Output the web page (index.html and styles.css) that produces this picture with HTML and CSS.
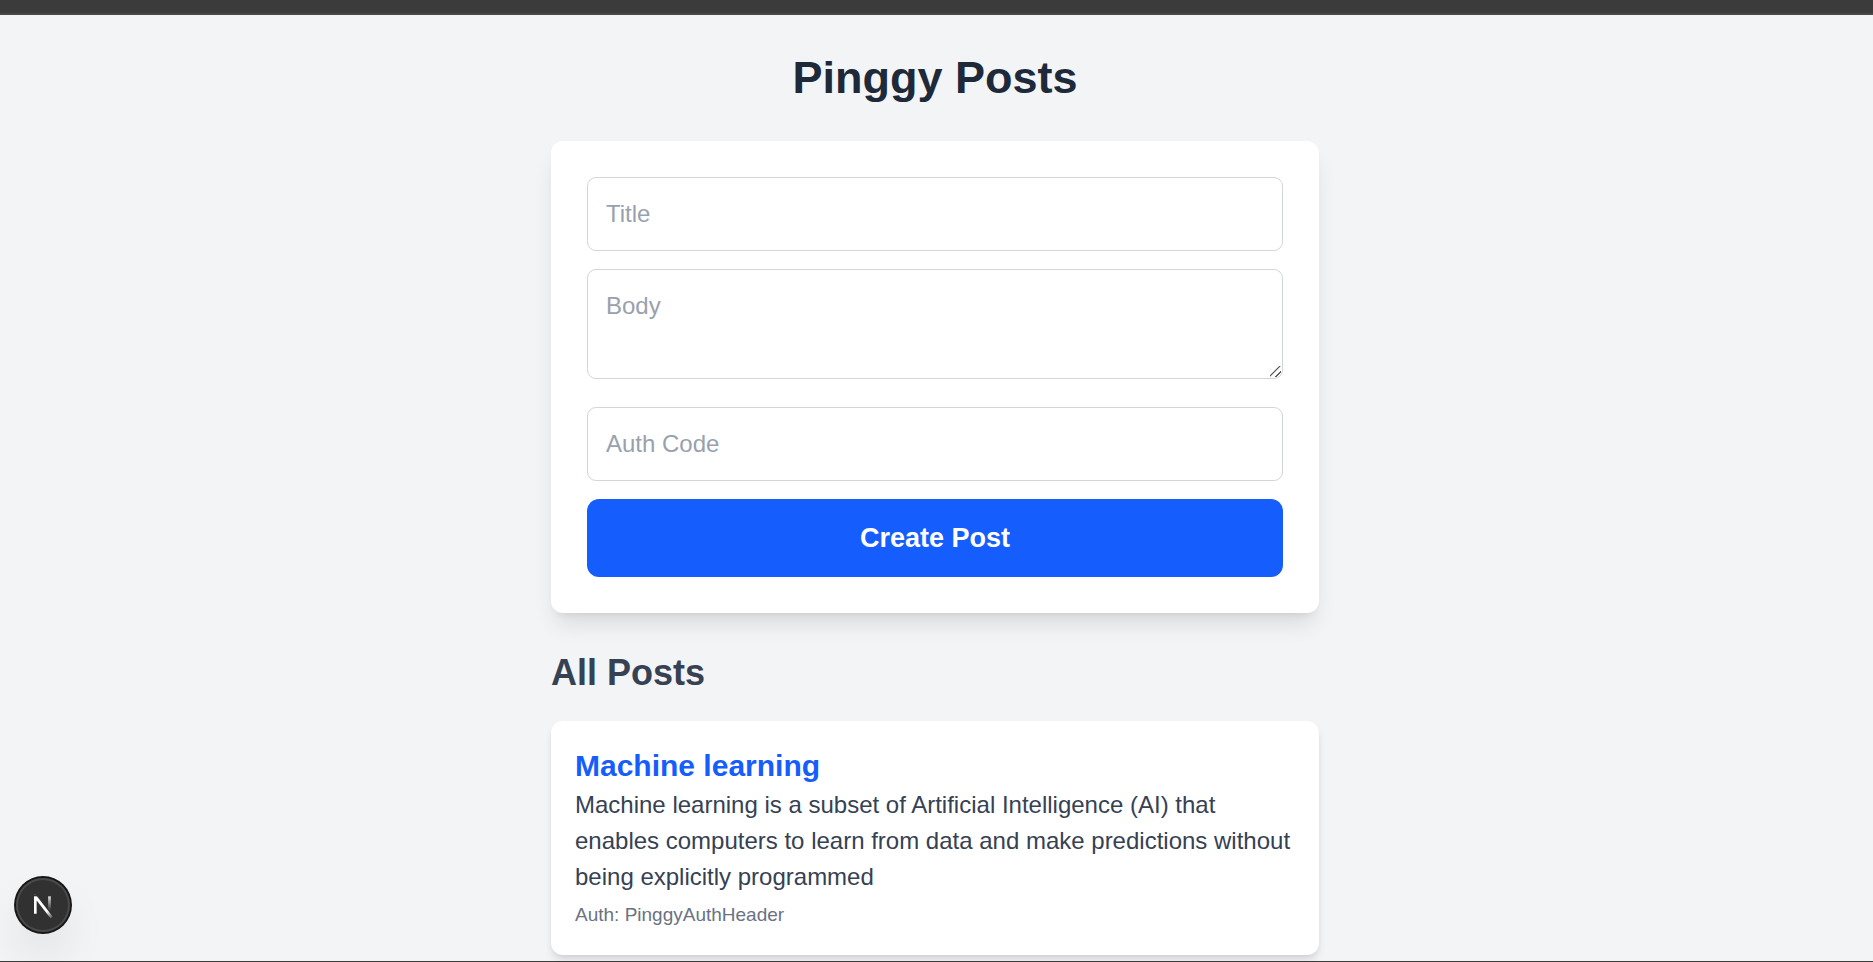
FILE: index.html
```html
<!DOCTYPE html>
<html lang="en">
<head>
  <meta charset="utf-8">
  <meta name="viewport" content="width=device-width, initial-scale=1">
  <title>Pinggy Posts</title>
  <link rel="stylesheet" href="styles.css">
</head>
<body class="page">
  <div class="topbar"></div>
  <main class="main">
    <div class="container">
      <h1 class="title">Pinggy Posts</h1>
      <form class="form-card">
        <input class="field" type="text" placeholder="Title" aria-label="Title">
        <textarea class="field field-area" rows="2" placeholder="Body" aria-label="Body"></textarea>
        <input class="field" type="text" placeholder="Auth Code" aria-label="Auth Code">
        <button class="submit" type="submit">Create Post</button>
      </form>
      <h2 class="section-title">All Posts</h2>
      <article class="post">
        <h3 class="post-title">Machine learning</h3>
        <p class="post-body">Machine learning is a subset of Artificial Intelligence (AI) that enables computers to learn from data and make predictions without being explicitly programmed</p>
        <p class="post-auth">Auth: PinggyAuthHeader</p>
      </article>
    </div>
  </main>
  <div class="bottom-line"></div>
  <button class="dev-badge" type="button" aria-label="Open dev tools">
    <svg class="dev-icon" viewBox="0 0 36 36" fill="none" aria-hidden="true">
      <defs>
        <linearGradient id="diagonal-fade" x1="9.95" y1="11.12" x2="15.48" y2="17.97" gradientUnits="userSpaceOnUse">
          <stop stop-color="#fff"/>
          <stop offset="0.75" stop-color="#fff" stop-opacity="0"/>
        </linearGradient>
        <linearGradient id="stem-fade" x1="11.82" y1="1.4" x2="11.79" y2="10.6" gradientUnits="userSpaceOnUse">
          <stop stop-color="#fff" stop-opacity="0.8"/>
          <stop offset="1" stop-color="#fff" stop-opacity="0"/>
        </linearGradient>
        <mask id="stem-top">
          <rect width="36" height="36" fill="#fff"/>
          <rect width="5" height="1" fill="#000"/>
        </mask>
      </defs>
      <g transform="translate(10.5 11.2)" stroke-width="1.86">
        <path d="M13.3 15.2 L2.34 1 V12.6" stroke="url(#diagonal-fade)" mask="url(#stem-top)"/>
        <path d="M11.825 1 V12.6" stroke="url(#stem-fade)"/>
      </g>
    </svg>
  </button>
</body>
</html>
```

FILE: styles.css
```css
*,
*::before,
*::after {
  box-sizing: border-box;
}

.page {
  display: flex;
  flex-direction: column;
  min-height: 100vh;
  margin: 0;
  background: #f3f4f6;
  font-family: "Liberation Sans", Arial, sans-serif;
  font-size: 24px;
  line-height: 36px;
}

.topbar {
  height: 15px;
  background: #3b3b3b;
  border-bottom: 2px solid #474747;
}

.main {
  flex: 1;
  padding: 36px 27px 6px 24px;
}

.container {
  max-width: 768px;
  margin: 0 auto;
}

.title {
  margin: 0 0 36px;
  color: #1e2939;
  font-size: 45px;
  line-height: 54px;
  text-align: center;
}

.form-card {
  display: flex;
  flex-direction: column;
  gap: 18px;
  padding: 36px;
  background: #fff;
  border-radius: 12px;
  box-shadow: 0 15px 22px -4px rgba(0, 0, 0, 0.1), 0 6px 9px -6px rgba(0, 0, 0, 0.1);
}

.field {
  display: block;
  width: 100%;
  margin: 0;
  padding: 18px;
  border: 1px solid #d1d5dc;
  border-radius: 9px;
  background: #fff;
  color: #1e2939;
  font: inherit;
}

input.field {
  height: 74px;
}

.field-area {
  margin-bottom: 10px;
  resize: vertical;
}

/* Two diagonal grip strokes */
.field-area::-webkit-resizer {
  background: linear-gradient(135deg, transparent 40%, #555 43%, #555 48%, transparent 51%, transparent 70%, #555 73%, #555 78%, transparent 81%) 3px 3px / 11px 11px no-repeat;
}

.field::placeholder {
  color: #99a1af;
}

.submit {
  padding: 18px;
  border: 0;
  border-radius: 12px;
  background: #155dfc;
  color: #fff;
  font: inherit;
  font-size: 27px;
  font-weight: 700;
  line-height: 42px;
  cursor: pointer;
}

.section-title {
  margin: 36px 0 24px;
  color: #364153;
  font-size: 36px;
  line-height: 48px;
}

.post {
  padding: 24px;
  background: #fff;
  border-radius: 12px;
  box-shadow: 0 6px 9px -1px rgba(0, 0, 0, 0.1), 0 3px 6px -3px rgba(0, 0, 0, 0.1);
}

.post-title {
  margin: 0;
  color: #155dfc;
  font-size: 30px;
  line-height: 42px;
}

.post-body {
  margin: 0;
  color: #364153;
}

.post-auth {
  margin: 6px 0 3px;
  color: #6a7282;
  font-size: 19px;
  line-height: 27px;
}

.bottom-line {
  height: 1px;
  background: #3b3b3b;
}

.dev-badge {
  position: fixed;
  left: 16px;
  bottom: 30px;
  width: 54px;
  height: 54px;
  padding: 0;
  border: 0;
  border-radius: 50%;
  background: #313131;
  box-shadow: 0 0 0 2px #171717, inset 0 0 0 2px #4a4a4a, 0 24px 48px -12px rgba(0, 0, 0, 0.24);
  cursor: pointer;
}

.dev-icon {
  display: block;
  width: 100%;
  height: 100%;
}
```
